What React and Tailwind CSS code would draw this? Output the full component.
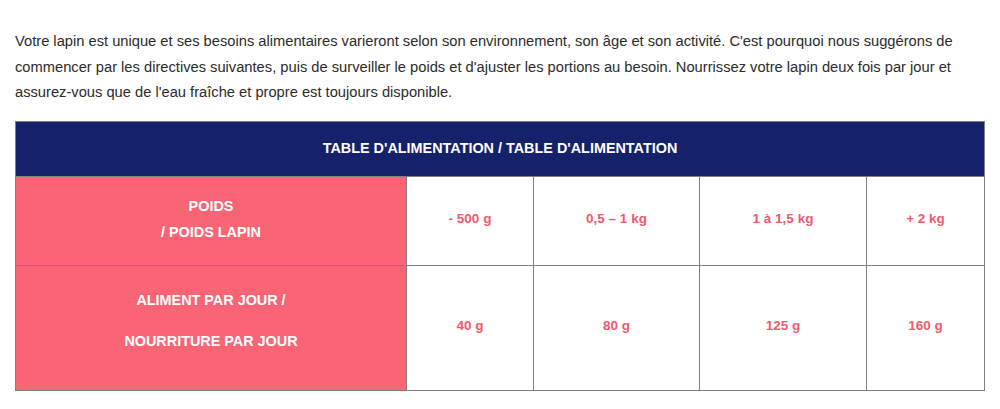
import React from "react";

const weights = ["- 500 g", "0,5 – 1 kg", "1 à 1,5 kg", "+ 2 kg"];
const portions = ["40 g", "80 g", "125 g", "160 g"];
const widths = ["w-[391px]", "w-[127px]", "w-[166px]", "w-[167px]", "w-[118px]"];

const ValueCell = ({ children }) => (
  <td className="border border-[#808080] text-center align-middle text-[13.5px] font-bold text-[#f5586c] pb-[2px]">
    {children}
  </td>
);

const App = () => {
  return (
    <div className="bg-white w-[1000px] h-[409px] px-[15px] pt-[29px] font-['Liberation_Sans',Arial,sans-serif]">
      <p className="text-[14.7px] leading-[25.5px] text-[#2b2b2b] mb-[15px]">
        Votre lapin est unique et ses besoins alimentaires varieront selon son environnement, son âge et son activité.
        C'est pourquoi nous suggérons de commencer par les directives suivantes, puis de surveiller le poids et
        d'ajuster les portions au besoin. Nourrissez votre lapin deux fois par jour et assurez-vous que de l'eau
        fraîche et propre est toujours disponible.
      </p>

      <table className="border-collapse w-[970px] table-fixed">
        <colgroup>
          {widths.map((w, i) => (
            <col key={i} className={w} />
          ))}
        </colgroup>
        <tbody>
          <tr className="h-[55px]">
            <th
              colSpan={5}
              className="border border-[#808080] bg-[#15216b] text-white text-[14.4px] font-bold text-center align-middle"
            >
              TABLE D'ALIMENTATION / TABLE D'ALIMENTATION
            </th>
          </tr>
          <tr className="h-[89px]">
            <td className="border border-[#808080] bg-[#f96575] text-white text-[14.4px] font-bold text-center align-middle leading-[26px] pb-[3px]">
              POIDS
              <br />/ POIDS LAPIN
            </td>
            {weights.map((w) => (
              <ValueCell key={w}>{w}</ValueCell>
            ))}
          </tr>
          <tr className="h-[125px]">
            <td className="border border-[#808080] bg-[#f96575] text-white text-[14.4px] font-bold text-center align-middle leading-[26px]">
              <p className="mb-[15px]">ALIMENT PAR JOUR /</p>
              <p className="mb-[15px]">NOURRITURE PAR JOUR</p>
            </td>
            {portions.map((p) => (
              <ValueCell key={p}>{p}</ValueCell>
            ))}
          </tr>
        </tbody>
      </table>
    </div>
  );
};

export default App;
